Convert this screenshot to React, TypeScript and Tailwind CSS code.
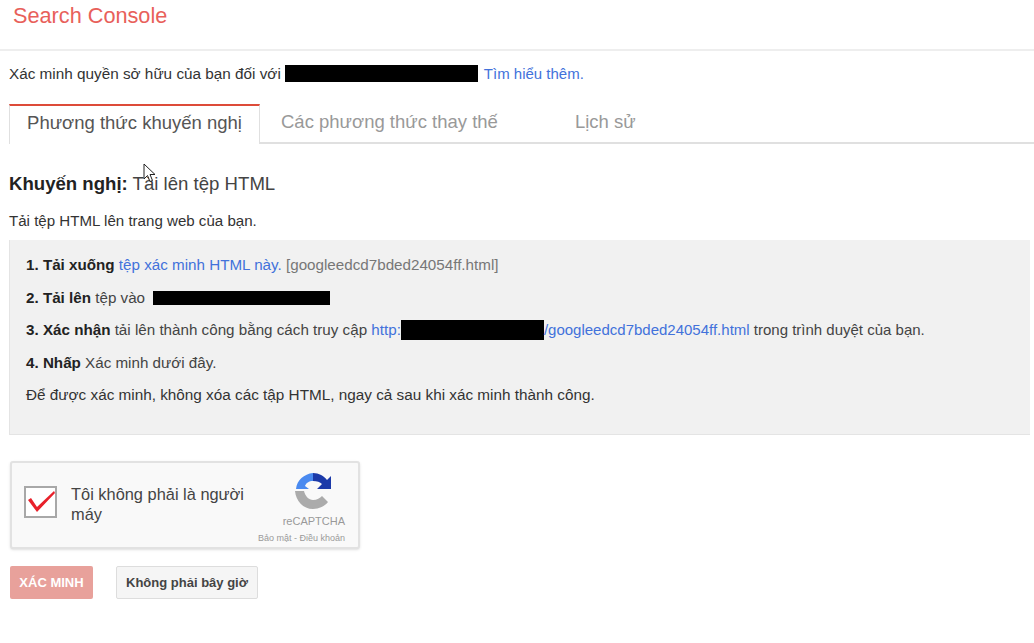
import React from 'react';

const Redacted = ({ className }: { className: string }) => (
  <span className={`inline-block bg-black align-middle ${className}`} />
);

const RecaptchaLogo = () => (
  <svg width="37" height="37" viewBox="0 0 37 37" fill="none">
    <path d="M18 0c6 0 11 3 14 7l4-4v13H22l5-5c-2-2-5-3-9-3z" fill="#1c3aa9" />
    <path d="M18 0v8c-4 0-7 2-8 5l4 3H1C2 7 9 1 18 0z" fill="#4a8af0" />
    <path d="M0 18h9c1 5 5 9 9 9s7-2 9-4l6 6c-3 4-9 7-15 7C8 36 1 28 0 18z" fill="#ababab" />
  </svg>
);

const CursorIcon = () => (
  <svg width="13" height="21" viewBox="0 0 13 21" className="absolute left-[143px] top-[163px]">
    <path d="M1 1v15l3.500-3.500 2.500 6 2.500-1-2.500-6H12z" fill="#fff" stroke="#222" strokeWidth="1" />
  </svg>
);

export default function App() {
  return (
    <div className="relative h-[643px] w-[1034px] overflow-hidden bg-white font-['Liberation_Sans',Arial,sans-serif] text-[#333]">
      <CursorIcon />

      <header className="h-[51px] border-b-2 border-[#eeeeee] pl-[13px] pt-[2px] text-[21.700px] leading-[28px] text-[#e8605a]">
        Search Console
      </header>

      <div className="mt-[13px] flex h-[20px] items-center pl-[9px] text-[15.300px] text-[#333]">
        <span>Xác minh quyền sở hữu của bạn đối với</span>
        <Redacted className="mb-[2px] ml-[4px] h-[17px] w-[193px]" />
        <span className="ml-[6px] text-[15px] text-[#4272db]">Tìm hiểu thêm.</span>
      </div>

      <div className="mt-[20px] ml-[9px] flex h-[40px] items-stretch border-b-2 border-[#e0e0e0] text-[18.500px]">
        <div className="-mb-[2px] flex w-[251px] items-center justify-center border-x border-t-2 border-x-[#e0e0e0] border-t-[#dd4b39] bg-white pb-[4px] text-[#555]">
          Phương thức khuyến nghị
        </div>
        <div className="ml-[21px] flex items-center pb-[2px] text-[#999]">Các phương thức thay thế</div>
        <div className="ml-[77px] flex items-center pb-[2px] text-[#999]">Lịch sử</div>
      </div>

      <h2 className="mt-[29px] pl-[9px] text-[18.600px] leading-[22px] text-[#444]">
        <span className="font-bold text-[#222]">Khuyến nghị:</span> Tải lên tệp HTML
      </h2>

      <p className="mt-[16px] pl-[9px] text-[15.100px] leading-[20px] text-[#333]">Tải tệp HTML lên trang web của bạn.</p>

      <div className="ml-[9px] mt-[9px] flex h-[195px] w-[1021px] flex-col gap-[12.500px] border-b border-l border-[#e4e4e4] bg-[#f1f1f1] pl-[16px] pt-[15.200px] text-[15.200px] leading-[20px] text-[#444]">
        <p>
          <b className="text-[#222]">1. Tải xuống</b> <span className="text-[#4272db]">tệp xác minh HTML này.</span>{' '}
          <span className="text-[#777]">[googleedcd7bded24054ff.html]</span>
        </p>
        <p className="flex items-center">
          <b className="text-[#222]">2. Tải lên</b>&nbsp;tệp vào
          <Redacted className="ml-[8px] h-[14px] w-[177px]" />
        </p>
        <p className="flex items-center whitespace-nowrap">
          <b className="text-[#222]">3. Xác nhận</b>&nbsp;tải lên thành công bằng cách truy cập&nbsp;
          <span className="text-[#4272db]">http:</span>
          <Redacted className="h-[20px] w-[143px]" />
          <span className="text-[15px] text-[#4272db]">/googleedcd7bded24054ff.html</span>
          <span className="text-[15px]">&nbsp;trong trình duyệt của bạn.</span>
        </p>
        <p>
          <b className="text-[#222]">4. Nhấp</b> Xác minh dưới đây.
        </p>
        <p className="text-[15.300px] text-[#333]">Để được xác minh, không xóa các tập HTML, ngay cả sau khi xác minh thành công.</p>
      </div>

      <div className="ml-[10px] mt-[26px] flex h-[88px] w-[350px] rounded-[3px] border-2 border-[#e2e2e2] bg-[#f9f9f9] shadow-sm">
        <div className="ml-[12px] mt-[23px] flex h-[32px] w-[33px] items-center justify-center border-2 border-[#a8a8a8] bg-white">
          <svg width="29" height="28" viewBox="0 0 29 28" fill="none">
            <path d="M2 12l3-2 6 9L28 3l1 2-18 19z" fill="#e8202a" />
          </svg>
        </div>
        <div className="ml-[14px] mt-[21px] w-[190px] text-[16.400px] leading-[20px] text-[#444]">Tôi không phải là người máy</div>
        <div className="ml-auto mr-[13px] mt-[10px] flex flex-col items-end whitespace-nowrap">
          <div className="mr-[13px]">
            <RecaptchaLogo />
          </div>
          <div className="mt-[5px] text-[11px] leading-[12px] text-[#999]">reCAPTCHA</div>
          <div className="mt-[6px] text-[9px] leading-[10px] text-[#999]">Bảo mật - Điều khoản</div>
        </div>
      </div>

      <div className="ml-[10px] mt-[17px] flex gap-[23px] text-[13px] font-bold">
        <button className="h-[33px] w-[83px] rounded-[2px] bg-[#e8a19b] text-white">XÁC MINH</button>
        <button className="h-[33px] w-[142px] rounded-[2px] border border-[#dddddd] bg-[#f5f5f5] text-[#444]">Không phải bây giờ</button>
      </div>
    </div>
  );
}
